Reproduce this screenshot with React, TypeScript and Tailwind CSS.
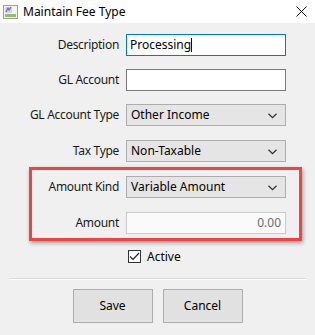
import React from "react"

const font = { fontFamily: '"Noto Sans", "Segoe UI", Arial, sans-serif' }

const Chevron = () => (
  <svg width="9" height="6" viewBox="0 0 9 6" className="absolute right-[8px] top-[8px]">
    <path d="M0.5 0.8 L4.5 4.6 L8.5 0.8" fill="none" stroke="#333" strokeWidth="1.3" />
  </svg>
)

const Row = ({ label, children, className = "" }: { label: string; children: React.ReactNode; className?: string }) => (
  <div className={`flex items-center h-[22px] ${className}`}>
    <div className="w-[119px] text-right text-[12px] tracking-[-0.3px] text-[#1a1a1a]">{label}</div>
    <div className="ml-[7px] w-[160px] h-[22px]">{children}</div>
  </div>
)

const Select = ({ value }: { value: string }) => (
  <div className="relative h-full w-full bg-[#e5e5e5] border border-[#adadad] text-[12px] pl-[4px] leading-[20px] text-black">
    {value}
    <Chevron />
  </div>
)

export default function App() {
  return (
    <div className="relative w-[315px] h-[335px] bg-[#f0f0f0] overflow-hidden" style={font}>
      {/* title bar */}
      <div className="h-[23px] bg-white flex items-center">
        <svg width="15" height="14" viewBox="0 0 15 14" className="ml-[3px]">
          <rect x="0.5" y="0.5" width="14" height="13" fill="#f4f4e8" stroke="#9aa58a" />
          <rect x="2" y="2" width="7" height="6" fill="#c9d7f0" />
          <path d="M3 7 L5 3 L6 5 L8 2" stroke="#7a5fc0" strokeWidth="1.2" fill="none" />
          <rect x="2" y="9" width="11" height="3" fill="#8fbf6a" />
        </svg>
        <span className="ml-[5px] text-[12px] text-black">Maintain Fee Type</span>
        <svg width="11" height="11" viewBox="0 0 11 11" className="ml-auto mr-[8px]">
          <path d="M0.5 0.5 L10.5 10.5 M10.5 0.5 L0.5 10.5" stroke="#111" strokeWidth="1" />
        </svg>
      </div>

      {/* form */}
      <div className="pt-[11px]">
        <Row label="Description">
          <div className="h-full w-full bg-white border border-[#0078d7] text-[12px] pl-[3px] leading-[20px] text-black flex items-center">
            Processing<span className="inline-block w-px h-[14px] bg-black" />
          </div>
        </Row>
        <Row label="GL Account" className="mt-[13px]">
          <div className="h-full w-full bg-white border border-[#7a7a7a]" />
        </Row>
        <Row label="GL Account Type" className="mt-[13px]">
          <Select value="Other Income" />
        </Row>
        <Row label="Tax Type" className="mt-[14px]">
          <Select value="Non-Taxable" />
        </Row>
        <Row label="Amount Kind" className="mt-[14px]">
          <Select value="Variable Amount" />
        </Row>
        <Row label="Amount" className="mt-[14px]">
          <div className="h-full w-full bg-[#fafafa] border border-[#cccccc] text-[12px] pr-[4px] leading-[20px] text-[#6d6d6d] text-right">
            0.00
          </div>
        </Row>

        <div className="mt-[16px] flex items-center ml-[128px] h-[13px]">
          <div className="w-[13px] h-[13px] border border-[#333] bg-white flex items-center justify-center">
            <svg width="11" height="9" viewBox="0 0 11 9">
              <path d="M1 4.5 L4 7.5 L10 1" fill="none" stroke="#222" strokeWidth="1.2" />
            </svg>
          </div>
          <span className="ml-[6px] text-[12px] text-black">Active</span>
        </div>

        <div className="mt-[15px] mx-[9px] h-[2px] border-t border-[#dcdcdc] border-b border-b-white" />

        <div className="mt-[9px] flex justify-center gap-[10px]">
          <button className="w-[80px] h-[34px] bg-[#e1e1e1] border border-[#adadad] text-[12px] text-black">Save</button>
          <button className="w-[80px] h-[34px] bg-[#e1e1e1] border border-[#adadad] text-[12px] text-black">Cancel</button>
        </div>
      </div>

      {/* highlight annotation */}
      <div className="absolute left-[29px] top-[167px] w-[273px] h-[74px] border-[3px] border-[#f04444] shadow-[1px_2px_4px_rgba(0,0,0,0.35)]" />
    </div>
  )
}
